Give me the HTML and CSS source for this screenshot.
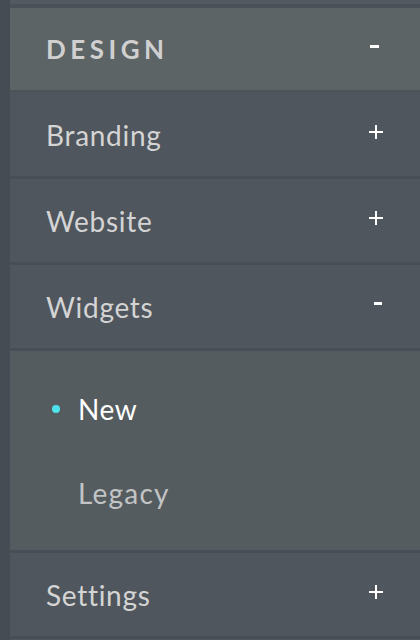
FILE: index.html
```html
<!DOCTYPE html>
<html>
<head>
<meta charset="utf-8">
<link rel="stylesheet" href="styles.css">
</head>
<body>
<div class="page">
  <div class="rail"></div>
  <nav class="menu">
    <div class="stub"></div>
    <div class="row row-head">
      <span class="label head-label">DESIGN</span>
      <span class="minus minus-head"></span>
    </div>
    <div class="row">
      <span class="label">Branding</span>
      <svg class="plus" width="14" height="14" viewBox="0 0 14 14"><path d="M7 0V14M0 7H14" stroke="#fff" stroke-width="2"/></svg>
    </div>
    <div class="row">
      <span class="label">Website</span>
      <svg class="plus" width="14" height="14" viewBox="0 0 14 14"><path d="M7 0V14M0 7H14" stroke="#fff" stroke-width="2"/></svg>
    </div>
    <div class="row">
      <span class="label">Widgets</span>
      <span class="minus minus-sub"></span>
    </div>
    <div class="sub">
      <div class="sub-item active"><span class="dot"></span><span class="sub-label">New</span></div>
      <div class="sub-item"><span class="sub-label">Legacy</span></div>
    </div>
    <div class="row">
      <span class="label">Settings</span>
      <svg class="plus" width="14" height="14" viewBox="0 0 14 14"><path d="M7 0V14M0 7H14" stroke="#fff" stroke-width="2"/></svg>
    </div>
    <div class="stub-bottom"></div>
  </nav>
</div>
</body>
</html>
```

FILE: styles.css
```css
html, body {
  margin: 0;
  padding: 0;
  background: #454c53;
}
body {
  font-family: "Lato", "Open Sans", sans-serif;
  width: 420px;
  height: 640px;
  overflow: hidden;
}
.page {
  display: flex;
  height: 640px;
}
.rail {
  width: 10px;
  flex: none;
  background: #454c53;
}
.menu {
  flex: 1;
  display: flex;
  flex-direction: column;
  background: #484f56;
}
.stub {
  height: 4px;
  background: #535a60;
  border-bottom: 4px solid #4a5158;
}
.row {
  height: 83px;
  flex: none;
  display: flex;
  align-items: center;
  justify-content: space-between;
  padding: 0 37px 0 36px;
  background: #4f565d;
  border-bottom: 3px solid #474e55;
}
.row-head {
  height: 82px;
  background: #5d6466;
  border-bottom: 3px solid #4d545b;
}
.label {
  font-size: 28px;
  color: #d4d4d4;
  letter-spacing: 0.7px;
}
.head-label {
  font-weight: 700;
  font-size: 26px;
  letter-spacing: 4.5px;
  color: #d0d0d0;
}
.plus {
  margin-top: -5px;
  display: block;
}
.minus {
  display: block;
  height: 3px;
  background: #fff;
  margin-top: -6px;
}
.minus-head {
  width: 9px;
  margin-right: 4px;
}
.minus-sub {
  width: 8px;
  margin-right: 1px;
}
.sub {
  background: #555c60;
  padding: 16px 0 15px 0;
  border-bottom: 3px solid #474e55;
  display: flex;
  flex-direction: column;
}
.sub-item {
  height: 84px;
  display: flex;
  align-items: center;
  padding-left: 68px;
  position: relative;
}
.sub-label {
  font-size: 28px;
  color: #c2c4c5;
  letter-spacing: 1.2px;
}
.active .sub-label {
  color: #ffffff;
  letter-spacing: 0.6px;
}
.dot {
  position: absolute;
  left: 42px;
  top: 38px;
  width: 8px;
  height: 8px;
  border-radius: 50%;
  background: #4ee4ee;
}
.stub-bottom {
  flex: 1;
  background: #4f565d;
}
```
